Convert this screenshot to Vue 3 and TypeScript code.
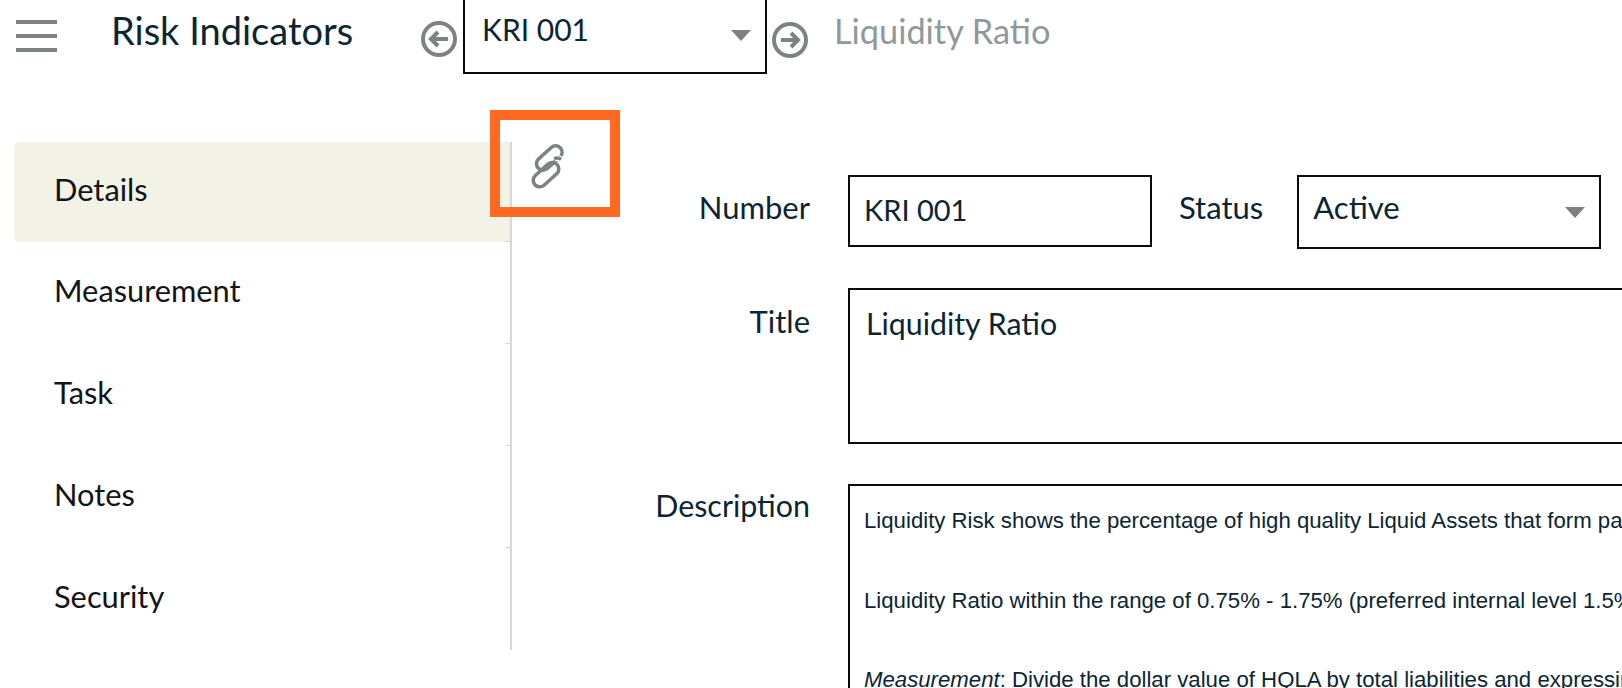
<template>
  <div class="page">
    <header class="topbar">
      <button class="menu-btn" type="button" aria-label="Menu">
        <span></span><span></span><span></span>
      </button>
      <h1 class="page-title">Risk Indicators</h1>
      <svg class="nav-arrow" viewBox="0 0 38 38" aria-hidden="true">
        <circle cx="19" cy="19" r="16" />
        <path d="M28 19H11M18 12l-7 7 7 7" />
      </svg>
      <div class="record-select">
        <span class="record-text">KRI 001</span>
        <i class="caret"></i>
      </div>
      <svg class="nav-arrow next" viewBox="0 0 38 38" aria-hidden="true">
        <circle cx="19" cy="19" r="16" />
        <path d="M10 19h17M20 12l7 7-7 7" />
      </svg>
      <span class="record-name">Liquidity Ratio</span>
    </header>

    <main class="body">
      <nav class="side-menu">
        <a
          v-for="item in menuItems"
          :key="item"
          class="side-item"
          :class="{ active: item === activeItem }"
        >{{ item }}</a>
      </nav>

      <section class="content">
        <div class="link-callout">
          <svg class="link-icon" viewBox="0 0 34 46" aria-hidden="true">
            <g fill="none" stroke-width="3.5" transform="translate(18.3 14) rotate(-42)">
              <rect class="chain" x="-28.6" y="3.7" width="30" height="13" rx="6.5" />
              <rect class="chain" x="-15" y="-6.5" width="30" height="13" rx="6.5" />
              <path class="chain-cut" d="M3 3.9A6.5 6.5 0 0 1 7.8 9" />
              <path class="chain" d="M3 3.9A6.5 6.5 0 0 1 7.8 9" />
            </g>
          </svg>
        </div>

        <div class="form-row first">
          <label class="field-label">Number</label>
          <div class="box number-box">KRI 001</div>
          <label class="status-label">Status</label>
          <div class="box status-box">
            <span>Active</span>
            <i class="caret"></i>
          </div>
        </div>

        <div class="form-row title-row">
          <label class="field-label">Title</label>
          <div class="box title-box">Liquidity Ratio</div>
        </div>

        <div class="form-row desc-row">
          <label class="field-label desc-label">Description</label>
          <div class="box desc-box">
            <p v-for="line in description" :key="line.text">
              <em v-if="line.lead">{{ line.lead }}</em>{{ line.text }}
            </p>
          </div>
        </div>
      </section>
    </main>
  </div>
</template>

<script setup lang="ts">
interface DescriptionLine {
  lead?: string
  text: string
}

const menuItems: string[] = ['Details', 'Measurement', 'Task', 'Notes', 'Security']
const activeItem = 'Details'

const description: DescriptionLine[] = [
  { text: 'Liquidity Risk shows the percentage of high quality Liquid Assets that form part of total liabilities.' },
  { text: 'Liquidity Ratio within the range of 0.75% - 1.75% (preferred internal level 1.5%) is considered acceptable.' },
  { lead: 'Measurement', text: ': Divide the dollar value of HQLA by total liabilities and expressing the result as a percentage.' }
]
</script>

<style>
html,
body {
  margin: 0;
  overflow: hidden;
  background: #fff;
}
</style>

<style scoped>
.page {
  width: 1622px;
  height: 688px;
  overflow: hidden;
  font-family: Lato, "Noto Sans", sans-serif;
  color: #0b2533;
}

.topbar {
  display: flex;
  align-items: flex-start;
  height: 74px;
}

.menu-btn {
  display: flex;
  flex-direction: column;
  gap: 10px;
  width: 41px;
  margin: 20px 0 0 16px;
  padding: 0;
  border: 0;
  background: none;
}

.menu-btn span {
  height: 4px;
  background: #7c8482;
}

.page-title {
  margin: 7px 0 0 54px;
  width: 309px;
  font-size: 38px;
  line-height: 46px;
  font-weight: 400;
}

.nav-arrow {
  width: 38px;
  height: 38px;
  margin: 20px 5px 0 0;
  filter: blur(0.5px);
  flex: none;
}

.nav-arrow.next {
  margin: 21px 0 0 4px;
}

.nav-arrow circle,
.nav-arrow path {
  fill: none;
  stroke: #7c8482;
  stroke-width: 4;
}

.record-select {
  box-sizing: border-box;
  display: flex;
  align-items: flex-start;
  width: 304px;
  height: 74px;
  padding: 10px 14px 0 17px;
  border: 2px solid #0a0a0a;
  border-top: 0;
  flex: none;
}

.record-text {
  font-size: 30px;
  line-height: 38px;
}

.caret {
  width: 0;
  height: 0;
  margin: 20px 0 0 auto;
  border-left: 10px solid transparent;
  border-right: 10px solid transparent;
  border-top: 11px solid #808080;
}

.record-name {
  margin: 9px 0 0 25px;
  font-size: 34.3px;
  line-height: 44px;
  color: #90989c;
}

.body {
  display: flex;
  align-items: flex-start;
  padding: 68px 0 0 14px;
}

.side-menu {
  display: flex;
  flex-direction: column;
  flex: none;
  width: 496px;
  border-right: 2px solid #d6d8d4;
}

.side-item {
  position: relative;
  box-sizing: border-box;
  height: 102px;
  padding: 29px 0 0 40px;
  font-size: 30.8px;
  line-height: 40px;
  color: #111418;
}

.side-item:first-child {
  height: 100px;
  padding-top: 28px;
}

.side-item.active {
  background: #f2f3e6;
  border-radius: 6px 0 0 6px;
}

.side-item:not(:last-child)::after {
  content: "";
  position: absolute;
  right: 0;
  bottom: 0;
  width: 5px;
  height: 1px;
  background: #d6d8d4;
}

.content {
  position: relative;
  flex: 1;
  min-width: 0;
  padding-top: 33px;
}

.link-callout {
  position: absolute;
  left: -22px;
  top: -32px;
  box-sizing: border-box;
  width: 130px;
  height: 107px;
  border: 10px solid #ff6a22;
}

.link-icon {
  position: absolute;
  left: 31px;
  top: 24px;
  width: 34px;
  height: 46px;
  filter: blur(0.5px);
}

.chain {
  stroke: #7c8482;
}

.chain-cut {
  stroke: #fff;
  stroke-width: 6;
}

.form-row {
  display: flex;
  align-items: flex-start;
}

.field-label {
  flex: none;
  width: 298px;
  margin-right: 38px;
  text-align: right;
  font-size: 31px;
  line-height: 40px;
}

.first .field-label {
  margin-top: 12px;
}

.box {
  box-sizing: border-box;
  border: 2px solid #0a0a0a;
  flex: none;
}

.number-box {
  width: 304px;
  height: 72px;
  padding: 13px 14px 0;
  font-size: 29px;
  line-height: 40px;
}

.status-label {
  margin: 12px 34px 0 27px;
  font-size: 31px;
  line-height: 40px;
}

.status-box {
  display: flex;
  width: 304px;
  height: 74px;
  padding: 10px 14px 0 14px;
  font-size: 31px;
  line-height: 40px;
}

.status-box .caret {
  margin-top: 20px;
}

.title-row {
  margin-top: 39px;
}

.title-row .field-label {
  margin-top: 13px;
}

.title-box {
  width: 900px;
  height: 156px;
  padding: 13px 16px 0;
  font-size: 30.3px;
  line-height: 40px;
}

.desc-row {
  margin-top: 40px;
}

.desc-row .desc-label {
  margin-top: 1px;
  font-size: 30.4px;
}

.desc-box {
  width: 900px;
  height: 400px;
  padding: 21px 14px 0;
  font-family: "Liberation Sans", Arial, sans-serif;
  font-size: 22.2px;
  line-height: 27px;
  white-space: nowrap;
}

.desc-box p {
  margin: 0 0 52.5px;
}
</style>
